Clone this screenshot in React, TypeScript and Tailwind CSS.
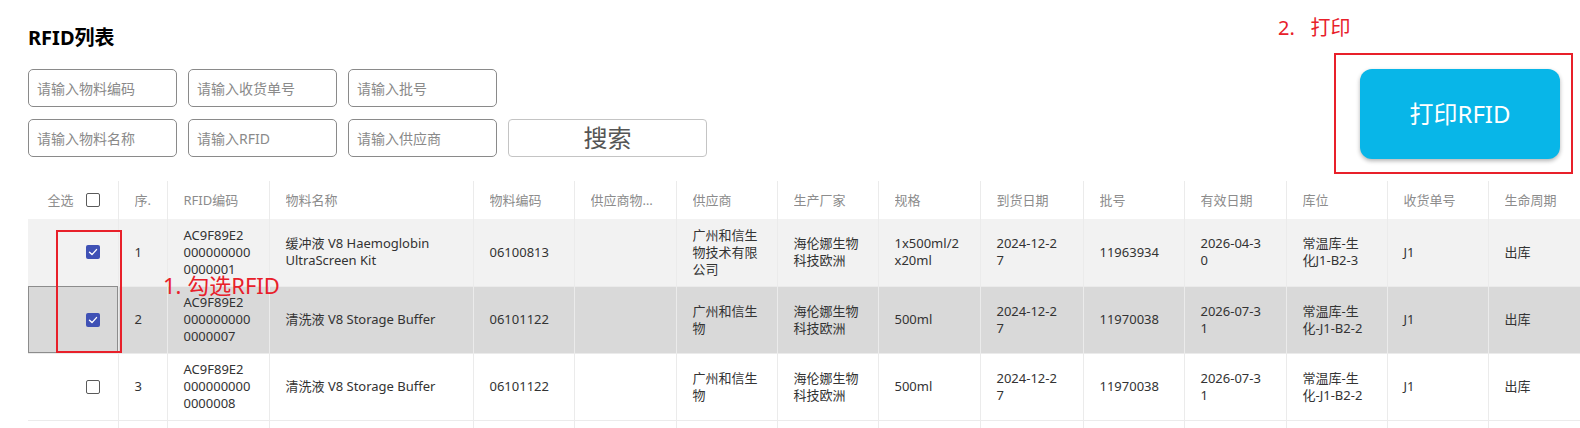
import type { ReactNode } from "react";

type Row = {
  no: number;
  checked: boolean;
  bg: string;
  rfid: string[];
  name: string[];
  code: string;
  supplierCode: string;
  supplier: string[];
  maker: string[];
  spec: string[];
  arrive: string[];
  batch: string;
  expire: string[];
  location: string[];
  receipt: string;
  life: string;
};

const widths = [90, 49, 102, 204, 101, 102, 101, 101, 102, 103, 101, 102, 101, 101, 120];

const headers = ["序.", "RFID编码", "物料名称", "物料编码", "供应商物料编码", "供应商", "生产厂家", "规格", "到货日期", "批号", "有效日期", "库位", "收货单号", "生命周期"];

const rows: Row[] = [
  {
    no: 1,
    checked: true,
    bg: "bg-[#f2f2f2]",
    rfid: ["AC9F89E2", "000000000", "0000001"],
    name: ["缓冲液 V8 Haemoglobin", "UltraScreen Kit"],
    code: "06100813",
    supplierCode: "",
    supplier: ["广州和信生", "物技术有限", "公司"],
    maker: ["海伦娜生物", "科技欧洲"],
    spec: ["1x500ml/2", "x20ml"],
    arrive: ["2024-12-2", "7"],
    batch: "11963934",
    expire: ["2026-04-3", "0"],
    location: ["常温库-生", "化J1-B2-3"],
    receipt: "J1",
    life: "出库",
  },
  {
    no: 2,
    checked: true,
    bg: "bg-[#d9d9d9]",
    rfid: ["AC9F89E2", "000000000", "0000007"],
    name: ["清洗液 V8 Storage Buffer"],
    code: "06101122",
    supplierCode: "",
    supplier: ["广州和信生", "物"],
    maker: ["海伦娜生物", "科技欧洲"],
    spec: ["500ml"],
    arrive: ["2024-12-2", "7"],
    batch: "11970038",
    expire: ["2026-07-3", "1"],
    location: ["常温库-生", "化-J1-B2-2"],
    receipt: "J1",
    life: "出库",
  },
  {
    no: 3,
    checked: false,
    bg: "bg-white",
    rfid: ["AC9F89E2", "000000000", "0000008"],
    name: ["清洗液 V8 Storage Buffer"],
    code: "06101122",
    supplierCode: "",
    supplier: ["广州和信生", "物"],
    maker: ["海伦娜生物", "科技欧洲"],
    spec: ["500ml"],
    arrive: ["2024-12-2", "7"],
    batch: "11970038",
    expire: ["2026-07-3", "1"],
    location: ["常温库-生", "化-J1-B2-2"],
    receipt: "J1",
    life: "出库",
  },
];

function Checkbox({ checked }: { checked: boolean }) {
  if (checked) {
    return (
      <span className="inline-flex w-[14px] h-[14px] rounded-[2px] bg-[#3f51b5] items-center justify-center">
        <svg width="14" height="14" viewBox="0 0 14 14" fill="none">
          <path d="M3.5 7.2 L6 9.6 L10.5 4.6" stroke="white" strokeWidth="1.4" strokeLinecap="round" strokeLinejoin="round" />
        </svg>
      </span>
    );
  }
  return <span className="inline-block w-[14px] h-[14px] rounded-[2px] border-[1.5px] border-[#5a5a5a] bg-white" />;
}

function Lines({ lines }: { lines: string[] }) {
  return (
    <>
      {lines.map((l, i) => (
        <div key={i} className="whitespace-nowrap">{l}</div>
      ))}
    </>
  );
}

function Cell({ children }: { children?: ReactNode }) {
  return <td className="border-r border-[#ebebeb] pl-4 pr-1 align-middle">{children}</td>;
}

export default function App() {
  return (
    <div className="relative w-[1580px] h-[428px] overflow-hidden bg-white font-['Noto_Sans','Noto_Sans_CJK_SC',sans-serif] text-[#333]">
      <div className="flex justify-between h-[181px]">
        <div className="pl-[28px] pt-[24px]">
          <h1 className="text-[20px] leading-[28px] font-bold text-black">RFID列表</h1>
          <div className="mt-[17px] flex flex-col gap-[12px]">
            <div className="flex gap-[11px]">
              {["请输入物料编码", "请输入收货单号", "请输入批号"].map((p) => (
                <input key={p} placeholder={p} className="w-[149px] h-[38px] px-2 border border-[#8a8a8a] rounded-[5px] text-[14px] placeholder:text-[#8a8a8a] outline-none" />
              ))}
            </div>
            <div className="flex gap-[11px]">
              {["请输入物料名称", "请输入RFID", "请输入供应商"].map((p) => (
                <input key={p} placeholder={p} className="w-[149px] h-[38px] px-2 border border-[#8a8a8a] rounded-[5px] text-[14px] placeholder:text-[#8a8a8a] outline-none" />
              ))}
              <button className="w-[199px] h-[38px] border border-[#c4c4c4] rounded-[4px] text-[24px] leading-none text-[#555] bg-white">搜索</button>
            </div>
          </div>
        </div>
        <div className="pr-[7px] pt-[14px] w-[302px] flex flex-col">
          <div className="text-[20px] leading-[28px] text-[#e8202a] whitespace-pre">2.   打印</div>
          <div className="ml-[56px] mt-[11px] w-[239px] h-[121px] border-2 border-[#e8202a] pl-[24px] pt-[14px]">
            <button className="w-[200px] h-[90px] rounded-[12px] bg-[#08b6e8] text-white text-[24px] shadow-[0_2px_4px_rgba(0,0,0,0.3)]">打印RFID</button>
          </div>
        </div>
      </div>

      <div className="ml-[28px]">
        <table className="table-fixed border-collapse text-[13px] leading-[17px]" style={{ width: widths.reduce((a, b) => a + b, 0) }}>
          <colgroup>
            {widths.map((w, i) => (
              <col key={i} style={{ width: w }} />
            ))}
          </colgroup>
          <thead>
            <tr className="h-[38px] text-[#8c8c8c]">
              <th className="border-r border-[#ebebeb] pr-[18px] font-normal">
                <div className="flex items-center justify-end gap-[12px]">
                  <span>全选</span>
                  <Checkbox checked={false} />
                </div>
              </th>
              {headers.map((h) => (
                <th key={h} className="border-r border-[#ebebeb] pl-4 pr-4 font-normal text-left">
                  <div className="truncate">{h}</div>
                </th>
              ))}
            </tr>
          </thead>
          <tbody>
            {rows.map((r) => (
              <tr key={r.no} className={`h-[67px] border-b border-[#ebebeb] ${r.bg}`}>
                <td className={`border-r border-[#ebebeb] pr-[18px] align-middle ${r.no === 2 ? "outline outline-1 -outline-offset-1 outline-[#8c8c8c]" : ""}`}>
                  <div className="flex justify-end items-center">
                    <Checkbox checked={r.checked} />
                  </div>
                </td>
                <Cell>{r.no}</Cell>
                <Cell><Lines lines={r.rfid} /></Cell>
                <Cell><Lines lines={r.name} /></Cell>
                <Cell>{r.code}</Cell>
                <Cell>{r.supplierCode}</Cell>
                <Cell><Lines lines={r.supplier} /></Cell>
                <Cell><Lines lines={r.maker} /></Cell>
                <Cell><Lines lines={r.spec} /></Cell>
                <Cell><Lines lines={r.arrive} /></Cell>
                <Cell>{r.batch}</Cell>
                <Cell><Lines lines={r.expire} /></Cell>
                <Cell><Lines lines={r.location} /></Cell>
                <Cell>{r.receipt}</Cell>
                <Cell>{r.life}</Cell>
              </tr>
            ))}
            <tr className="h-[40px]">
              {widths.map((_, i) => (
                <td key={i} className="border-r border-[#ebebeb]" />
              ))}
            </tr>
          </tbody>
        </table>
      </div>

      {/* annotation: step 1 */}
      <div className="absolute left-[56px] top-[230px] w-[66px] h-[123px] border-2 border-[#e8202a]" />
      <div className="absolute left-[163px] top-[270px] text-[22px] leading-[30px] text-[#e8202a]">1. 勾选RFID</div>
    </div>
  );
}
